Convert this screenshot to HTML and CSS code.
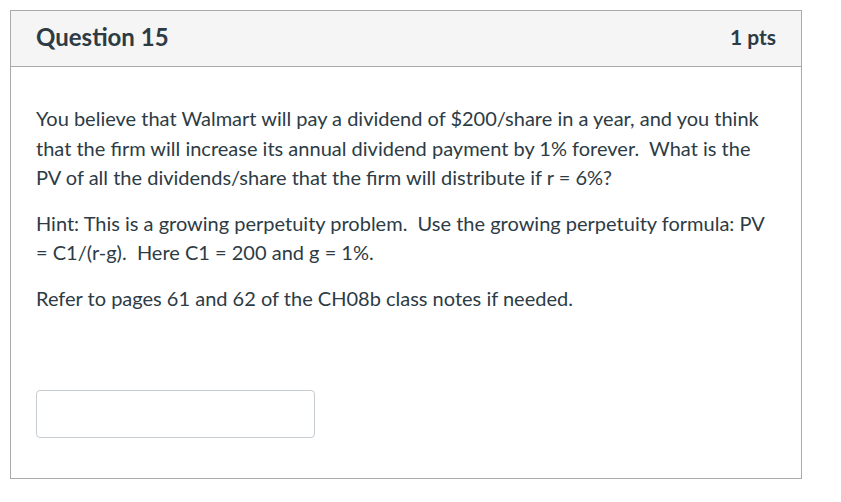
FILE: index.html
```html
<!DOCTYPE html>
<html lang="en">
<head>
<meta charset="utf-8">
<title>Question 15</title>
<link rel="stylesheet" href="styles.css">
</head>
<body>
<div class="page">
  <div class="question">
    <div class="header">
      <span class="title">Question 15</span>
      <span class="points">1 pts</span>
    </div>
    <div class="content">
      <p>You believe that Walmart will pay a dividend of $200/share in a year, and you think that the firm will increase its annual dividend payment by 1% forever.&nbsp; What is the PV of all the dividends/share that the firm will distribute if r = 6%?</p>
      <p>Hint: This is a growing perpetuity problem.&nbsp; Use the growing perpetuity formula: PV = C1/(r-g).&nbsp; Here C1 = 200 and g = 1%.</p>
      <p>Refer to pages 61 and 62 of the CH08b class notes if needed.</p>
      <div class="answer">
        <input class="answer-input" type="text" aria-label="Answer">
      </div>
    </div>
  </div>
</div>
</body>
</html>
```

FILE: styles.css
```css
html, body {
  margin: 0;
  padding: 0;
  background: #ffffff;
}
body {
  font-family: Lato, "Liberation Sans", sans-serif;
  color: #2d3b45;
}
.page {
  padding: 10px;
}
.question {
  width: 790px;
  border: 1px solid #aaaaaa;
  background: #ffffff;
}
.header {
  display: flex;
  justify-content: space-between;
  align-items: center;
  height: 51px;
  padding: 0 25px 4px;
  background: #f5f5f5;
  border-bottom: 1px solid #aaaaaa;
}
.title {
  font-size: 24px;
  font-weight: 700;
}
.points {
  font-size: 21px;
  font-weight: 700;
}
.content {
  padding: 37px 25px 40px;
  font-size: 20px;
  line-height: 29.5px;
}
.content p {
  margin: 0 0 16px;
}
.answer {
  padding-top: 61px;
}
.answer-input {
  display: block;
  box-sizing: border-box;
  width: 279px;
  height: 48px;
  border: 1px solid #c7cdd1;
  border-radius: 4px;
  background: #ffffff;
  margin: 0;
}
```
